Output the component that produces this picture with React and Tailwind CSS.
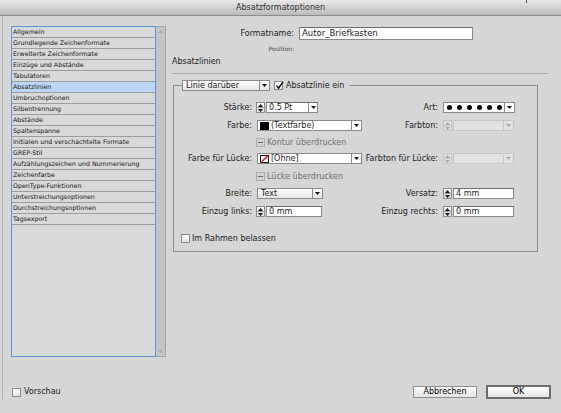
import React from 'react';

const listItems = [
  'Allgemein',
  'Grundlegende Zeichenformate',
  'Erweiterte Zeichenformate',
  'Einzüge und Abstände',
  'Tabulatoren',
  'Absatzlinien',
  'Umbruchoptionen',
  'Silbentrennung',
  'Abstände',
  'Spaltenspanne',
  'Initialen und verschachtelte Formate',
  'GREP-Stil',
  'Aufzählungszeichen und Nummerierung',
  'Zeichenfarbe',
  'OpenType-Funktionen',
  'Unterstreichungsoptionen',
  'Durchstreichungsoptionen',
  'Tagsexport',
];

const Tri = ({ up, disabled }) => (
  <svg width="5" height="3" viewBox="0 0 5 3" className="block">
    <path d={up ? 'M0 3H5L2.5 0Z' : 'M0 0H5L2.5 3Z'} fill={disabled ? '#a8a8a8' : '#151515'} />
  </svg>
);

const Spinner = ({ disabled }) => (
  <div
    className={`flex h-[11px] w-[9px] shrink-0 flex-col border ${
      disabled ? 'border-[#c4c4c4] bg-[#dfdfdf]' : 'border-[#8c8c8c] bg-linear-to-b from-[#fbfbfb] to-[#dadada]'
    }`}
  >
    <div className="flex flex-1 items-center justify-center">
      <Tri up disabled={disabled} />
    </div>
    <div className={`h-px w-full ${disabled ? 'bg-[#c8c8c8]' : 'bg-[#a0a0a0]'}`} />
    <div className="flex flex-1 items-center justify-center">
      <Tri disabled={disabled} />
    </div>
  </div>
);

const Select = ({ className = '', children, disabled, raised }) => (
  <div
    className={`flex h-[11px] shrink-0 items-center border ${
      disabled
        ? 'border-[#c6c6c6] bg-[#e2e2e2]'
        : raised
        ? 'border-[#8a8a8a] bg-linear-to-b from-[#ffffff] to-[#e6e6e6]'
        : 'border-[#8a8a8a] bg-white'
    } ${className}`}
  >
    <div className="flex h-full min-w-0 flex-1 items-center gap-[2px] pl-[2px]">{children}</div>
    <div
      className={`flex h-full w-[10px] items-center justify-center border-l ${
        disabled ? 'border-[#c6c6c6]' : 'border-[#8a8a8a]'
      }`}
    >
      <Tri disabled={disabled} />
    </div>
  </div>
);

const NumField = ({ value, width, arrow }) => (
  <div className="flex items-center gap-px">
    <Spinner />
    <div className={`flex h-[11px] items-center border border-[#8a8a8a] border-t-[#6f6f6f] bg-white ${width}`}>
      <span className="flex-1 pl-[2px]">{value}</span>
      {arrow && (
        <div className="flex h-full w-[9px] items-center justify-center border-l border-[#8a8a8a]">
          <Tri />
        </div>
      )}
    </div>
  </div>
);

const Check = ({ checked, dash, disabled }) => (
  <div
    className={`relative flex h-[9px] w-[9px] shrink-0 items-center justify-center border ${
      disabled ? 'border-[#ababab] bg-[#d2d2d2]' : 'border-[#8a8a8a] bg-linear-to-b from-[#ffffff] to-[#e2e2e2]'
    }`}
  >
    {checked && (
      <svg width="9" height="9" viewBox="0 0 9 9" className="absolute -top-px left-0">
        <path d="M1.6 4.6L3.6 7L8 1" stroke="#111" strokeWidth="1.4" fill="none" />
      </svg>
    )}
    {dash && <div className="h-px w-[5px] bg-[#6a6a6a]" />}
  </div>
);

const L1 = ({ children }) => <div className="w-[82px] shrink-0 pr-[4px] text-right">{children}</div>;
const L2 = ({ children }) => <div className="w-[81px] shrink-0 pr-[5px] text-right">{children}</div>;
const C1 = ({ children }) => <div className="flex w-[106px] shrink-0 items-center">{children}</div>;

const DisabledPair = () => (
  <div className="flex items-center gap-px">
    <Spinner disabled />
    <Select disabled className="w-[61px]" />
  </div>
);

export default function App() {
  return (
    <div className="relative h-[413px] w-[561px] overflow-hidden bg-[#d6d6d6] font-['DejaVu_Sans',sans-serif] text-[8px] leading-none text-[#1c1c1c]">
      {/* title bar */}
      <div className="flex h-[16px] items-center justify-center border-b border-[#8b8b8b] bg-linear-to-b from-[#e9e9e9] to-[#bbbbbb] text-[#303030]">
        Absatzformatoptionen
      </div>
      <div className="absolute left-[526px] top-0 h-[3px] w-px bg-[#555]" />

      <div className="ml-[2px] border-l border-[#b3b3b3]">
        <div className="flex h-[341px]">
          {/* left list */}
          <div className="pl-[8px] pt-[10px]">
            <div className="flex h-[331px]">
              <div className="w-[145px] border border-[#5f93d6] bg-[#d9d9d9]">
                {listItems.map((item) => (
                  <div
                    key={item}
                    className={`flex h-[11px] items-center border-b border-[#9c9c9c] pl-px text-[6.3px] text-[#141414] ${
                      item === 'Absatzlinien' ? 'bg-[#bcd6f8]' : ''
                    }`}
                  >
                    {item}
                  </div>
                ))}
              </div>
              <div className="flex w-[10px] flex-col items-center justify-between border-y border-r border-[#a2a2a2] bg-[#c4c4c4] py-[3px]">
                <Tri up disabled />
                <Tri disabled />
              </div>
            </div>
          </div>

          {/* right panel */}
          <div className="ml-[6px] flex w-[376px] flex-col pt-[11px]">
            <div className="flex h-[13px] items-center">
              <div className="w-[122px] text-right">Formatname:</div>
              <div className="ml-[5px] flex h-[13px] w-[174px] items-center border border-[#8a8a8a] border-t-[#6c6c6c] bg-white pl-[2px] text-[8.5px]">
                Autor_Briefkasten
              </div>
            </div>
            <div className="mt-[6px] h-[6px] w-[122px] text-right text-[6px] text-[#444]">Position:</div>
            <div className="mt-[6px] h-[9px]">Absatzlinien</div>
            <div className="mt-[6px] h-px w-[376px] bg-[#a9a9a9]" />

            <fieldset className="ml-px mt-[6px] w-[365px] border border-[#8d8d8d] pb-[7px]">
              <legend className="ml-[8px]">
                <div className="flex items-center pr-[5px]">
                  <Select raised className="w-[88px]">
                    <span className="pl-px">Linie darüber</span>
                  </Select>
                  <div className="ml-[4px]">
                    <Check checked />
                  </div>
                  <span className="ml-[3px]">Absatzlinie ein</span>
                </div>
              </legend>

              <div className="mt-[11px] flex h-[11px] items-center">
                <L1>Stärke:</L1>
                <C1>
                  <NumField value="0.5 Pt" width="w-[52px]" arrow />
                </C1>
                <L2>Art:</L2>
                <Select className="w-[72px]">
                  <div className="flex items-center gap-[5px] pl-[1px]">
                    {[0, 1, 2, 3, 4, 5].map((d) => (
                      <div key={d} className="h-[5px] w-[5px] rounded-full bg-black" />
                    ))}
                  </div>
                </Select>
              </div>

              <div className="mt-[7px] flex h-[11px] items-center">
                <L1>Farbe:</L1>
                <C1>
                  <Select className="ml-px w-[105px]">
                    <div className="h-[8px] w-[9px] bg-black" />
                    <span>(Textfarbe)</span>
                  </Select>
                </C1>
                <L2>Farbton:</L2>
                <DisabledPair />
              </div>

              <div className="mt-[6px] flex h-[11px] items-center">
                <L1 />
                <C1>
                  <Check dash disabled />
                  <span className="ml-[2px] text-[#707070]">Kontur überdrucken</span>
                </C1>
              </div>

              <div className="mt-[5px] flex h-[11px] items-center">
                <L1>Farbe für Lücke:</L1>
                <C1>
                  <Select className="ml-px w-[105px]">
                    <svg width="9" height="8" viewBox="0 0 9 8" className="block shrink-0">
                      <rect x="0.5" y="0.5" width="8" height="7" fill="#fff" stroke="#111" />
                      <path d="M1 7.5L8 0.5" stroke="#e01818" strokeWidth="1.5" />
                    </svg>
                    <span>[Ohne]</span>
                  </Select>
                </C1>
                <L2>Farbton für Lücke:</L2>
                <DisabledPair />
              </div>

              <div className="mt-[7px] flex h-[11px] items-center">
                <L1 />
                <C1>
                  <Check dash disabled />
                  <span className="ml-[2px] text-[#707070]">Lücke überdrucken</span>
                </C1>
              </div>

              <div className="mt-[6px] flex h-[11px] items-center">
                <L1>Breite:</L1>
                <C1>
                  <Select raised className="ml-px w-[66px]">
                    <span className="pl-px">Text</span>
                  </Select>
                </C1>
                <L2>Versatz:</L2>
                <NumField value="4 mm" width="w-[61px]" />
              </div>

              <div className="mt-[7px] flex h-[11px] items-center">
                <L1>Einzug links:</L1>
                <C1>
                  <NumField value="0 mm" width="w-[56px]" />
                </C1>
                <L2>Einzug rechts:</L2>
                <NumField value="0 mm" width="w-[61px]" />
              </div>

              <div className="mt-[16px] flex h-[11px] items-center pl-[7px]">
                <Check />
                <span className="ml-[2px]">Im Rahmen belassen</span>
              </div>
            </fieldset>
          </div>
        </div>

        {/* bottom bar */}
        <div className="mt-[28px] flex h-[14px] items-center justify-between pl-[9px] pr-[10px]">
          <div className="flex items-center">
            <Check />
            <span className="ml-[3px]">Vorschau</span>
          </div>
          <div className="flex items-center gap-[9px]">
            <div className="flex h-[12px] w-[64px] items-center justify-center border border-[#8e8e8e] bg-linear-to-b from-[#ffffff] to-[#e3e3e3] text-black">
              Abbrechen
            </div>
            <div className="flex h-[14px] w-[65px] items-center justify-center border-2 border-[#6a6a6a] bg-linear-to-b from-[#ffffff] to-[#e3e3e3] text-black">
              OK
            </div>
          </div>
        </div>
      </div>
    </div>
  );
}
